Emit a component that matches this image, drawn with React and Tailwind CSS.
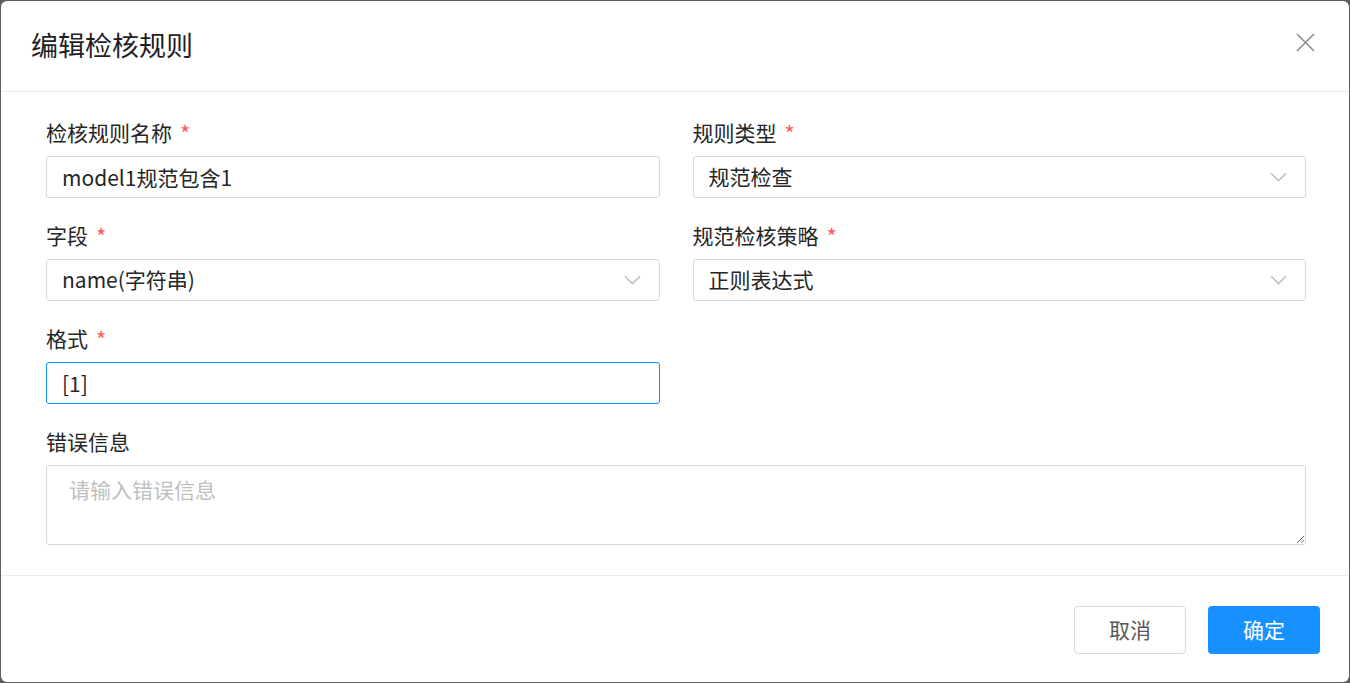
import React from 'react';

function Label({ children, required }) {
  return (
    <div className="h-[32px] flex items-center text-[21px] leading-[32px] text-[#262626]">
      <span>{children}</span>
      {required && <span className="ml-[8px] text-[#ff5a5c] text-[22px]">*</span>}
    </div>
  );
}

function Chevron() {
  return (
    <svg width="17" height="10" viewBox="0 0 17 10" fill="none" className="shrink-0">
      <path d="M1 1.2 L8.5 8.6 L16 1.2" stroke="#bfbfbf" strokeWidth="1.5" />
    </svg>
  );
}

function TextInput({ value, focused }) {
  return (
    <input
      defaultValue={value}
      readOnly
      className={`w-full h-[42px] px-[15px] rounded-[3px] border text-[21px] text-[#262626] outline-none bg-white ${
        focused ? 'border-[#1890ff]' : 'border-[#d9d9d9]'
      }`}
    />
  );
}

function Select({ value }) {
  return (
    <div className="w-full h-[42px] pl-[15px] pr-[18px] rounded-[3px] border border-[#d9d9d9] bg-white flex items-center justify-between text-[21px] text-[#262626]">
      <span>{value}</span>
      <Chevron />
    </div>
  );
}

export default function App() {
  return (
    <div className="w-[1350px] h-[683px] bg-[#5f5f5f] p-px font-['Noto_Sans_CJK_SC',sans-serif]">
      <div className="w-full h-full bg-white rounded-[6px] flex flex-col">
        <div className="h-[91px] shrink-0 flex items-center justify-between pl-[30px] pr-[34px] pb-[4px] border-b border-[#ececec]">
          <h2 className="text-[27px] text-[#1f1f1f] leading-none">编辑检核规则</h2>
          <button className="text-[#8c8c8c] -mt-[3px]">
            <svg width="19" height="19" viewBox="0 0 19 19" fill="none">
              <path d="M1 1 L18 18 M18 1 L1 18" stroke="currentColor" strokeWidth="1.6" />
            </svg>
          </button>
        </div>

        <div className="pl-[45px] pr-[43px] pt-[24px] pb-[30px] grid grid-cols-2 gap-x-[33px] gap-y-[21px]">
          <div className="flex flex-col gap-[8px]">
            <Label required>检核规则名称</Label>
            <TextInput value="model1规范包含1" />
          </div>
          <div className="flex flex-col gap-[8px]">
            <Label required>规则类型</Label>
            <Select value="规范检查" />
          </div>
          <div className="flex flex-col gap-[8px]">
            <Label required>字段</Label>
            <Select value="name(字符串)" />
          </div>
          <div className="flex flex-col gap-[8px]">
            <Label required>规范检核策略</Label>
            <Select value="正则表达式" />
          </div>
          <div className="flex flex-col gap-[8px]">
            <Label required>格式</Label>
            <TextInput value="[1]" focused />
          </div>
          <div />
          <div className="col-span-2 flex flex-col gap-[8px]">
            <Label>错误信息</Label>
            <textarea
              placeholder="请输入错误信息"
              className="w-full h-[80px] px-[22px] py-[8px] rounded-[3px] border border-[#d9d9d9] text-[21px] text-[#262626] placeholder:text-[#bfbfbf] outline-none resize-y"
            />
          </div>
        </div>

        <div className="flex-1 border-t border-[#ececec] flex items-start justify-end gap-[22px] pt-[30px] pr-[29px]">
          <button className="w-[112px] h-[48px] rounded-[4px] border border-[#d9d9d9] bg-white text-[21px] text-[#595959]">
            取消
          </button>
          <button className="w-[112px] h-[48px] rounded-[4px] bg-[#1890ff] text-[21px] text-white">
            确定
          </button>
        </div>
      </div>
    </div>
  );
}
